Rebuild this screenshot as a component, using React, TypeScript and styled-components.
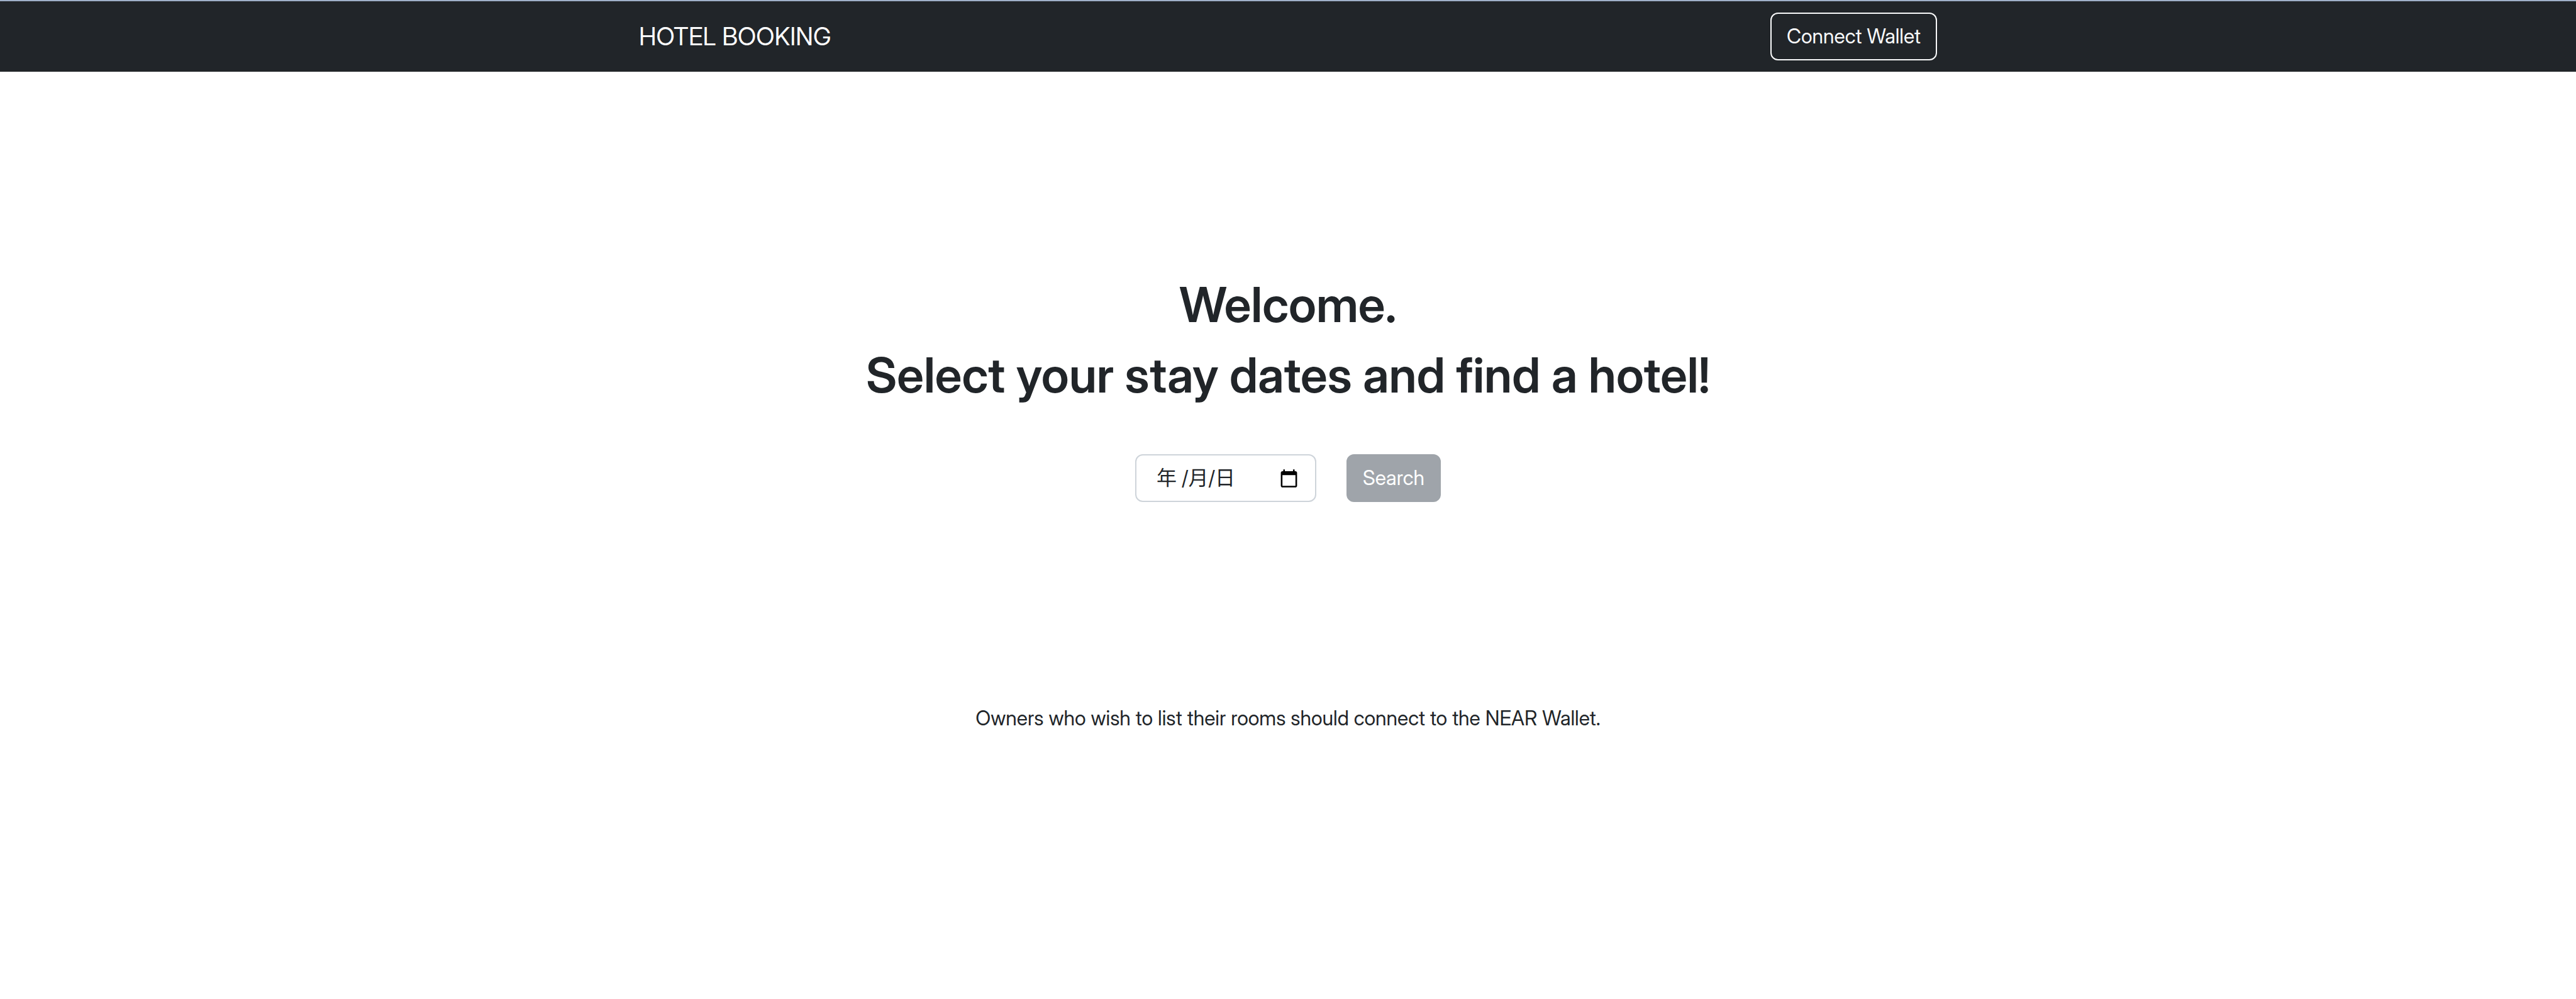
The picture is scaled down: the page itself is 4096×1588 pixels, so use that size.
import React, { useState } from 'react';
import styled, { createGlobalStyle } from 'styled-components';

const sans = `'Inter Display', Inter, 'Noto Sans CJK JP', sans-serif`;

const GlobalStyle = createGlobalStyle`
  *, *::before, *::after { box-sizing: border-box; }
  body {
    margin: 0;
    background: #fff;
    color: #212529;
    font-family: ${sans};
    font-size: 32px;
    line-height: 48px;
  }
`;

const Navbar = styled.header`
  border-top: 2px solid #a0b0c8;
  background: #212529;
  padding: 18px 0;
`;

const NavContainer = styled.nav`
  display: flex;
  align-items: center;
  justify-content: space-between;
  max-width: 2112px;
  margin: 0 auto;
  padding: 0 24px;
`;

const Brand = styled.a`
  color: #fff;
  font-size: 39px;
  line-height: 60px;
  text-decoration: none;
`;

const Button = styled.button<{ $variant: 'outline' | 'secondary' }>`
  padding: 12px 24px;
  border: 2px solid ${(p) => (p.$variant === 'outline' ? '#f8f9fa' : '#6c757d')};
  border-radius: 12px;
  background: ${(p) => (p.$variant === 'outline' ? 'transparent' : '#6c757d')};
  color: ${(p) => (p.$variant === 'outline' ? '#f8f9fa' : '#fff')};
  font: inherit;
  cursor: pointer;

  &:disabled {
    opacity: 0.65;
    cursor: default;
  }
`;

const Main = styled.main`
  display: flex;
  flex-direction: column;
  align-items: center;
  padding: 322px 24px;
  text-align: center;
`;

const Heading = styled.h1`
  margin: 0 0 16px;
  font-size: 77px;
  font-weight: 600;
  line-height: 96px;
`;

const SearchForm = styled.form`
  display: flex;
  align-items: center;
  gap: 48px;
  margin: 62px 0 320px;
`;

const DateField = styled.div`
  display: flex;
  align-items: center;
  width: 288px;
  height: 76px;
  padding: 0 26px 0 32px;
  border: 2px solid #ced4da;
  border-radius: 12px;
  background: #fff;
`;

const DateInput = styled.input`
  flex: 1;
  min-width: 0;
  padding: 0;
  border: 0;
  outline: 0;
  background: transparent;
  color: inherit;
  font: inherit;

  &::placeholder {
    color: #212529;
    opacity: 1;
  }
`;

const PickerButton = styled.button`
  display: flex;
  padding: 0;
  border: 0;
  background: none;
  color: #000;
  cursor: pointer;
`;

const Note = styled.p`
  margin: 0;
`;

function CalendarIcon() {
  return (
    <svg width="31" height="31" viewBox="0 0 24 24" fill="currentColor" aria-hidden="true">
      <path d="M20 3h-1V1h-2v2H7V1H5v2H4c-1.1 0-2 .9-2 2v16c0 1.1.9 2 2 2h16c1.1 0 2-.9 2-2V5c0-1.1-.9-2-2-2zm0 18H4V8h16v13z" />
    </svg>
  );
}

export default function App() {
  const [date, setDate] = useState('');

  return (
    <>
      <GlobalStyle />
      <Navbar>
        <NavContainer>
          <Brand href="#">HOTEL BOOKING</Brand>
          <Button type="button" $variant="outline">Connect Wallet</Button>
        </NavContainer>
      </Navbar>
      <Main>
        <Heading>Welcome.</Heading>
        <Heading>Select your stay dates and find a hotel!</Heading>
        <SearchForm onSubmit={(e) => e.preventDefault()}>
          <DateField>
            <DateInput
              type="text"
              aria-label="Stay date"
              placeholder="年 /月/日"
              value={date}
              onChange={(e) => setDate(e.target.value)}
            />
            <PickerButton type="button" aria-label="Open calendar">
              <CalendarIcon />
            </PickerButton>
          </DateField>
          <Button type="submit" $variant="secondary" disabled={date === ''}>Search</Button>
        </SearchForm>
        <Note>Owners who wish to list their rooms should connect to the NEAR Wallet.</Note>
      </Main>
    </>
  );
}
